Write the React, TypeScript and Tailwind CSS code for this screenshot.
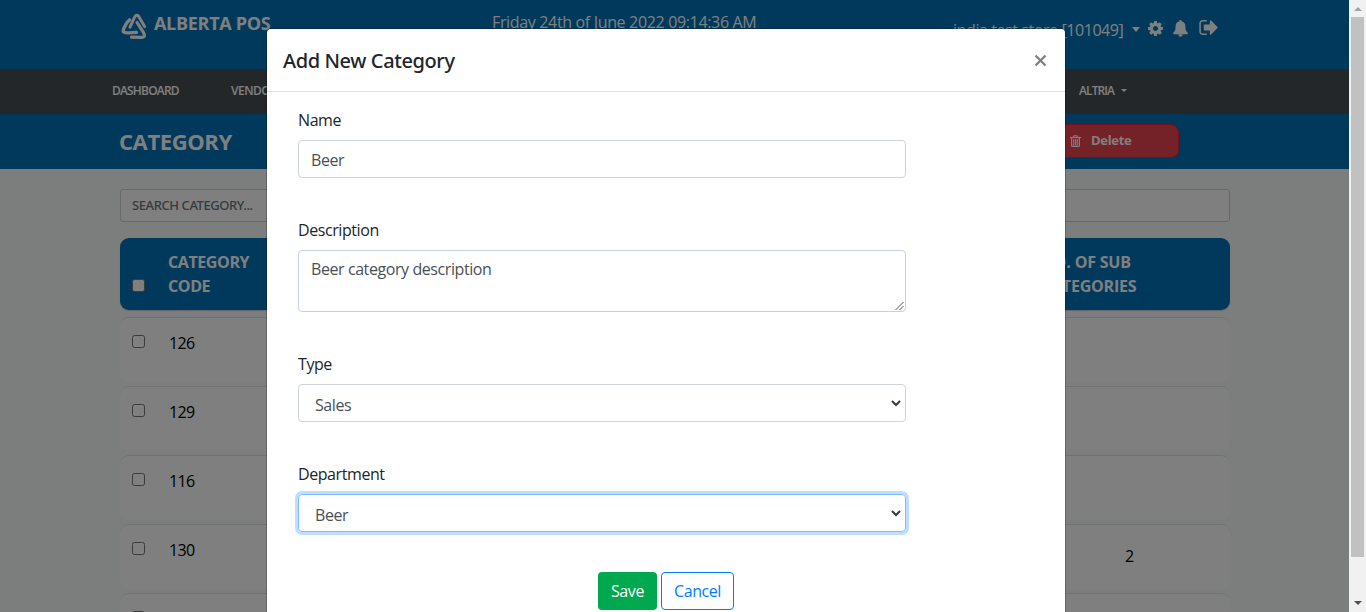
import React from "react";

function Logo() {
  return (
    <svg className="mt-[13px] h-[28px] w-[26px] shrink-0" viewBox="0 0 26 28" fill="none" stroke="#fff" strokeLinecap="round" strokeLinejoin="round">
      <path d="M8.6 6.8 C6.4 8.4 2.6 14.6 2.2 18 C2.1 20.4 9 20 15.5 19.4" strokeWidth="3.4" />
      <path d="M9 14.2 L13.2 5 C14.6 1.4 17 1.4 18.5 4.8 L23.6 13.6" strokeWidth="3" />
      <path d="M16 9.5 L22.4 19.4 C24.6 23.4 23 24.4 20.5 24.4 L10.5 24.2" strokeWidth="3.2" />
    </svg>
  );
}

function CogIcon({ className }: { className: string }) {
  return (
    <svg className={className} viewBox="128 128 1536 1536" fill="currentColor">
      <path d="M1152 896q0-106-75-181t-181-75-181 75-75 181 75 181 181 75 181-75 75-181zm512-109v222q0 12-8 23t-20 13l-185 28q-19 54-39 91 35 50 107 138 10 12 10 25t-9 23q-27 37-99 108t-94 71q-12 0-26-9l-138-108q-44 23-91 38-16 136-29 186-7 28-36 28h-222q-14 0-24.5-8.5t-11.5-21.5l-28-184q-49-16-90-37l-141 107q-10 9-25 9-14 0-25-11-126-114-165-168-7-10-7-23 0-12 8-23 15-21 51-66.5t54-70.5q-27-50-41-99l-183-27q-13-2-21-12.5t-8-23.5v-222q0-12 8-23t19-13l186-28q14-46 39-92-40-57-107-138-10-12-10-24 0-10 9-23 26-36 98.5-107.5t94.5-71.5q13 0 26 10l138 107q44-23 91-38 16-136 29-186 7-28 36-28h222q14 0 24.5 8.5t11.5 21.5l28 184q49 16 90 37l142-107q9-9 24-9 13 0 25 10 129 119 165 170 7 8 7 22 0 12-8 23-15 21-51 66.5t-54 70.5q26 50 41 98l183 28q13 2 21 12.5t8 23.5z" />
    </svg>
  );
}

function BellIcon({ className }: { className: string }) {
  return (
    <svg className={className} viewBox="0 0 15 17" fill="currentColor">
      <path d="M7.5 0 C8.2 0 8.6 .5 8.5 1.3 C11.2 1.9 12.4 3.9 12.4 6.4 C12.4 10 13.4 11.8 15 13 C15 13.8 14.6 14.2 13.9 14.2 H1.1 C.4 14.2 0 13.8 0 13 C1.6 11.8 2.6 10 2.6 6.4 C2.6 3.9 3.8 1.9 6.5 1.3 C6.4 .5 6.8 0 7.5 0Z M5.3 14.6 H9.7 C9.6 16 8.7 16.8 7.5 16.8 C6.3 16.8 5.4 16 5.3 14.6Z" />
    </svg>
  );
}

function SignOutIcon({ className }: { className: string }) {
  return (
    <svg className={className} viewBox="64 256 1568 1280" fill="currentColor">
      <path d="M704 1440q0 4 1 20t.5 26.5-3 23.5-10 19.5-20.5 6.5h-320q-119 0-203.5-84.5t-84.5-203.5v-704q0-119 84.5-203.5t203.5-84.5h320q13 0 22.5 9.5t9.5 22.5q0 4 1 20t.5 26.5-3 23.5-10 19.5-20.5 6.5h-320q-66 0-113 47t-47 113v704q0 66 47 113t113 47h312l11.5 1 11.5 3 8 5.5 7 9 2 13.5zm928-544q0 26-19 45l-544 544q-19 19-45 19t-45-19-19-45v-288h-448q-26 0-45-19t-19-45v-384q0-26 19-45t45-19h448v-288q0-26 19-45t45-19 45 19l544 544q19 19 19 45z" />
    </svg>
  );
}

function TrashIcon({ className }: { className: string }) {
  return (
    <svg className={className} viewBox="0 0 11 12" fill="none" stroke="currentColor">
      <path d="M0 2.5 H11" strokeWidth="1.2" />
      <path d="M3.4 2.2 L4 .7 H7 L7.6 2.2" strokeWidth="1.1" />
      <path d="M1.6 2.6 V10.4 Q1.6 11.4 2.6 11.4 H8.4 Q9.4 11.4 9.4 10.4 V2.6" strokeWidth="1.2" />
      <path d="M3.7 4 V10.5 M5.5 4 V10.5 M7.3 4 V10.5" strokeWidth="1.1" />
    </svg>
  );
}

function Caret({ className = "" }: { className?: string }) {
  return <span className={`inline-block h-0 w-0 border-x-transparent border-t-current ${className}`} />;
}

function Header() {
  return (
    <header className="flex h-[69px] bg-[#0073b8] pl-[121px] text-white">
      <div className="flex w-[371px] gap-[7px]">
        <Logo />
        <span className="pt-[10px] text-[18px] leading-[27px] font-bold tracking-[-0.3px] whitespace-nowrap">ALBERTA POS</span>
      </div>
      <span className="w-[461px] pt-[10px] text-[16px] leading-6 tracking-[-0.34px] whitespace-nowrap">Friday 24th of June 2022 09:14:36 AM</span>
      <div className="flex whitespace-nowrap">
        <span className="w-[171px] pt-[18px] text-[16px] leading-6 tracking-[-0.42px]">india test store [101049]</span>
        <Caret className="mt-[27px] ml-[8px] border-x-[4.5px] border-t-[5px]" />
        <CogIcon className="mt-[21px] ml-[8px] h-[15px] w-[15px]" />
        <BellIcon className="mt-[20px] ml-[10px] h-[17px] w-[15px]" />
        <SignOutIcon className="mt-[20px] ml-[11px] h-[15px] w-[19px]" />
      </div>
    </header>
  );
}

function Nav() {
  return (
    <nav className="flex h-[45px] items-center bg-[#484f55] pb-[2px] pl-[112px] text-[12px] font-semibold text-white">
      <span className="w-[119px] tracking-[-0.82px]">DASHBOARD</span>
      <span className="w-[848px] tracking-[-0.5px]">VENDORS</span>
      <span className="tracking-[-0.9px]">ALTRIA</span>
      <Caret className="ml-[7px] border-x-[3px] border-t-[3px]" />
    </nav>
  );
}

const rows = [
  { id: 1, code: "126", subs: "" },
  { id: 2, code: "129", subs: "" },
  { id: 3, code: "116", subs: "" },
  { id: 4, code: "130", subs: "2" },
  { id: 5, code: "", subs: "" },
];

function Checkbox({ className = "" }: { className?: string }) {
  return <span className={`h-[13px] w-[13px] shrink-0 rounded-[2.5px] border border-[#767676] bg-white ${className}`} />;
}

function CategoryTable() {
  return (
    <section className="mt-[16px] flex w-[1110px] flex-col">
      <div className="flex h-[72px] rounded-[9px] bg-[#0073b8] pl-3 text-[16px] leading-6 font-bold text-white shadow-[0_1px_1px_#c8cfd4]">
        <Checkbox className="mt-[41px]" />
        <span className="ml-[23px] w-[100px] pt-[12px] tracking-[-0.4px]">CATEGORY CODE</span>
        <span className="ml-[773px] w-[130px] pt-[12px] tracking-[-0.2px]">NO. OF SUB CATEGORIES</span>
      </div>
      <div className="mt-[7px] flex flex-col gap-[4px]">
        {rows.map((row) => (
          <div key={row.id} className="flex h-[65px] rounded-[9px] border-t border-[#dfe3e5] bg-white pl-3 text-[16px] leading-6 text-black">
            <Checkbox className="mt-[17px]" />
            <span className="ml-[24px] w-[837px] pt-[13px] tracking-[-0.6px]">{row.code}</span>
            <span className="ml-[119px] pt-[19px]">{row.subs}</span>
          </div>
        ))}
      </div>
    </section>
  );
}

function Chevron() {
  return (
    <svg className="h-[8px] w-[10px]" viewBox="0 0 10 8" fill="none" stroke="#343a40" strokeWidth="2">
      <path d="M1 2 L5 6 L9 2" />
    </svg>
  );
}

function Label({ children }: { children: React.ReactNode }) {
  return <label className="mb-[8px] block h-6 text-[16px] leading-[25px] tracking-[-0.42px] text-[#212529]">{children}</label>;
}

function Select({ value, focused = false }: { value: string; focused?: boolean }) {
  const ring = focused ? "border-[#80bdff] shadow-[0_0_0_3px_#bfdeff]" : "border-[#ced4da]";
  return (
    <div className={`flex h-[38px] items-center justify-between rounded-[4px] border pr-[4px] pl-[16px] ${ring}`}>
      <span className="pt-[3px]">{value}</span>
      <Chevron />
    </div>
  );
}

function Modal() {
  return (
    <div className="h-[640px] w-[798px] rounded-t-[4px] bg-white shadow-[0_0_0_1px_rgba(0,0,0,0.2)]">
      <div className="flex h-[63px] justify-between border-b border-[#dee2e6] pr-[18px] pl-4">
        <h5 className="pt-[17px] font-['Noto_Sans','Open_Sans',sans-serif] text-[20px] leading-[30px] font-medium tracking-[-0.4px] text-[#212529]">Add New Category</h5>
        <svg className="mt-[25px] h-[13px] w-[13px]" viewBox="0 0 13 13" stroke="#7f7f7f" strokeWidth="2.3">
          <path d="M1.5 1.5 L11.5 11.5 M11.5 1.5 L1.5 11.5" />
        </svg>
      </div>
      <form className="ml-[31px] w-[608px] pt-[16px] text-[16px] leading-6 tracking-[-0.42px] text-[#495057]">
        <Label>Name</Label>
        <div className="mb-[40px] h-[38px] rounded-[4px] border border-[#ced4da] px-3 pt-[7px]">Beer</div>
        <Label>Description</Label>
        <div className="mb-[40px] flex h-[62px] justify-between rounded-[4px] border border-[#c3d2e2] pt-[6px] pl-3">
          <span>Beer category description</span>
          <svg className="h-[10px] w-[10px] self-end" viewBox="0 0 10 10" stroke="#555" strokeWidth="1">
            <path d="M0.5 9 L8.5 1 M4.5 9 L8.5 5" />
          </svg>
        </div>
        <Label>Type</Label>
        <div className="mb-[40px]"><Select value="Sales" /></div>
        <Label>Department</Label>
        <Select value="Beer" focused />
        <div className="mt-[40px] ml-[300px] flex gap-1">
          <button type="button" className="h-[38px] w-[59px] rounded-[4px] bg-[#00a84f] text-white">Save</button>
          <button type="button" className="h-[38px] w-[73px] rounded-[4px] border border-[#007bff] text-[#007bff]">Cancel</button>
        </div>
      </form>
    </div>
  );
}

function Scrollbar() {
  return (
    <div className="flex h-[612px] w-[17px] flex-col items-center bg-[#f1f1f1]">
      <div className="flex h-[17px] items-center">
        <span className="h-0 w-0 border-x-4 border-b-4 border-x-transparent border-b-[#a3a3a3]" />
      </div>
      <div className="h-[540px] w-[13px] bg-[#c1c1c1]" />
      <span className="mt-[44px] h-0 w-0 border-x-4 border-t-4 border-x-transparent border-t-[#505050]" />
    </div>
  );
}

export default function App() {
  return (
    <div className="flex h-[612px] w-[1366px] overflow-hidden font-['Open_Sans','Noto_Sans',sans-serif]">
      <div className="relative h-[612px] w-[1349px] overflow-hidden bg-[#f7fcfa]">
        <Header />
        <Nav />
        <div className="flex h-[55px] justify-between bg-[#0073b8] pr-[170px] pl-[119px] text-white">
          <h1 className="pt-[11px] text-[22px] leading-[33px] font-bold tracking-[-0.4px]">CATEGORY</h1>
          <div className="mt-[10px] flex h-[34px] w-[136px] items-center rounded-[8px] border border-[#e82038] bg-[#e94350] pl-[26px] text-[13px] font-bold">
            <TrashIcon className="h-[12px] w-[11px]" />
            <span className="ml-[10px] tracking-[-0.3px]">Delete</span>
          </div>
        </div>
        <main className="px-[120px] pt-[20px]">
          <div className="flex h-[33px] w-[1110px] items-center rounded-[3px] border border-[#ced4da] bg-white px-[11px] pt-px font-['Noto_Sans','Open_Sans',sans-serif] text-[13px] font-medium tracking-[-0.42px] text-[#6c757d]">SEARCH CATEGORY...</div>
          <CategoryTable />
        </main>
        <div className="absolute inset-0 flex items-start bg-black/50 pt-[29px] pl-[267px]">
          <Modal />
        </div>
      </div>
      <Scrollbar />
    </div>
  );
}
